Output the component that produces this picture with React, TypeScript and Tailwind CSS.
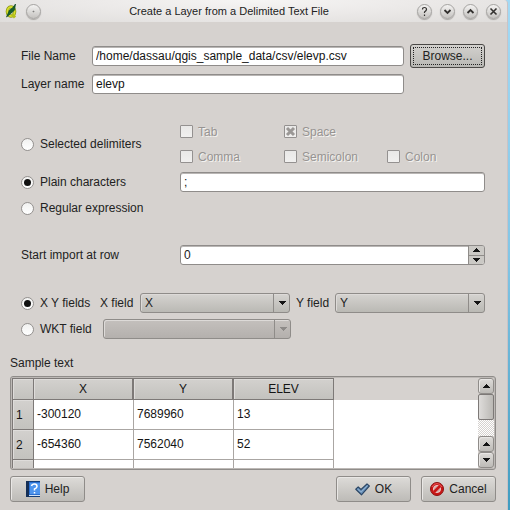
import React from "react";

const FIELD =
  "h-5 w-full min-w-0 rounded-[3px] border border-[#8f8c8a] bg-white px-[3px] text-[12px] leading-4 text-[#141414] shadow-[inset_0_1px_0_#b9b6b4] outline-none";
const BUTTON =
  "flex items-center justify-center rounded-[3px] border border-[#8f8c89] bg-linear-to-b from-[#dddbd8] to-[#bdbbb7] shadow-[inset_1px_1px_0_#e9e7e5]";

function Arrow({ up = false, dim = false }: { up?: boolean; dim?: boolean }) {
  return (
    <svg width="7" height="4" viewBox="0 0 7 4" aria-hidden="true" className={dim ? "text-[#8d8a88]" : "text-[#141414]"}>
      <path fill="currentColor" shapeRendering="crispEdges" d={up ? "M3 0h1v1h1v1h1v1h1v1H0V3h1V2h1V1h1z" : "M0 0h7v1H6v1H5v1H4v1H3V3H2V2H1V1H0z"} />
    </svg>
  );
}

function Radio({ id, group, label, checked = false }: { id: string; group: string; label: string; checked?: boolean }) {
  return (
    <div className="flex items-center gap-[6px]">
      <input
        id={id}
        type="radio"
        name={group}
        defaultChecked={checked}
        className="grid size-[13px] shrink-0 appearance-none place-items-center rounded-full border border-[#94918f] bg-linear-to-b from-[#f1f1f0] to-white checked:before:size-[7px] checked:before:rounded-full checked:before:bg-[#111] checked:before:content-['']"
      />
      <label htmlFor={id} className="whitespace-nowrap">{label}</label>
    </div>
  );
}

function Delimiter({ id, label, checked = false }: { id: string; label: string; checked?: boolean }) {
  return (
    <div className="flex h-[13px] items-center gap-[5px]">
      <span className="grid shrink-0">
        <input
          id={id}
          type="checkbox"
          disabled
          defaultChecked={checked}
          className="size-[13px] appearance-none rounded-[1px] border border-[#949190] bg-linear-to-b from-[#e9e8e7] to-[#f1f0ef] [grid-area:1/1]"
        />
        {checked && (
          <svg viewBox="0 0 13 13" aria-hidden="true" className="pointer-events-none size-[13px] [grid-area:1/1]">
            <path d="M3 3l7 7M10 3l-7 7" stroke="#9b9896" strokeWidth="3" />
          </svg>
        )}
      </span>
      <label htmlFor={id} className="text-[#979492] [text-shadow:1px_1px_0_#f4f2f0]">{label}</label>
    </div>
  );
}

function Combo({ id, label, value, disabled = false }: { id: string; label: string; value: string; disabled?: boolean }) {
  return (
    <div className="grid min-w-0 flex-1">
      <select
        id={id}
        aria-label={label}
        disabled={disabled}
        className="h-5 w-full appearance-none rounded-[3px] border border-[#8f8c89] bg-linear-to-b from-[#d5d3d0] to-[#bab9b4] px-1 text-[12px] leading-4 text-[#222] shadow-[inset_1px_1px_0_#dddad8] outline-none [grid-area:1/1] disabled:from-[#c4c0bd] disabled:to-[#b4b0ad] disabled:opacity-100"
      >
        <option>{value}</option>
      </select>
      <span className="pointer-events-none flex w-[17px] items-center justify-center justify-self-end border-l border-[#8f8c89] [grid-area:1/1]">
        <Arrow dim={disabled} />
      </span>
    </div>
  );
}

function TitleButton({ label, children }: { label: string; children: React.ReactNode }) {
  return (
    <button
      type="button"
      aria-label={label}
      className="grid size-[15px] shrink-0 place-items-center rounded-full border border-[#a5a3a1] bg-linear-to-b from-[#f4f3f2] to-[#c5c3c0] shadow-[0_1px_1px_#aaa7a4]"
    >
      <svg width="11" height="11" viewBox="0 0 11 11" aria-hidden="true" fill="none" stroke="#343230" strokeWidth="1.2">
        {children}
      </svg>
    </button>
  );
}

function TitleBar() {
  return (
    <header className="flex h-[22px] items-center bg-[radial-gradient(ellipse_at_top,#f6f5f4_0%,#eceae9_45%,#dfdddb_100%)] pr-[6px] pl-1">
      <div className="flex items-center gap-[7px]">
        <svg width="15" height="16" viewBox="0 0 15 16" aria-hidden="true">
          <ellipse cx="7" cy="8.500" rx="3.600" ry="4.600" fill="none" stroke="#8b9414" strokeWidth="3.400" />
          <ellipse cx="7" cy="8.500" rx="3.600" ry="4.600" fill="none" stroke="#d6df2c" strokeWidth="2" />
          <path d="M8 11l3 3.500" stroke="#b5c01c" strokeWidth="3" />
          <path d="M2.500 14l3-7 3-2 3-4-1 6-3 3z" fill="#17602d" stroke="#0d4821" strokeWidth=".7" />
        </svg>
        <TitleButton label="Keep above">
          <circle cx="5.500" cy="5.500" r=".2" />
        </TitleButton>
      </div>
      <h1 className="flex-1 text-center text-[11px]">Create a Layer from a Delimited Text File</h1>
      <div className="flex items-center gap-2">
        <TitleButton label="Help">
          <path d="M3.500 3.500Q3.500 1.500 5.500 1.500T7.500 3.500Q7.500 4.500 5.500 6V7M5.500 8.500V10" />
        </TitleButton>
        <TitleButton label="Minimize">
          <path d="M2.500 4l3 3 3-3" strokeWidth="1.800" />
        </TitleButton>
        <TitleButton label="Maximize">
          <path d="M2.500 7l3-3 3 3" strokeWidth="1.800" />
        </TitleButton>
        <TitleButton label="Close">
          <path d="M2.500 2.500l6 6M8.500 2.500l-6 6" strokeWidth="1.600" />
        </TitleButton>
      </div>
    </header>
  );
}

const ROWS = [
  ["-300120", "7689960", "13"],
  ["-654360", "7562040", "52"],
  ["", "", ""],
];
const HEAD =
  "border-b border-[#7d7977] bg-linear-to-b from-[#d3d1ce] to-[#c3c2be] font-normal shadow-[inset_1px_1px_0_#dedcda]";

function SampleTable() {
  return (
    <div className="flex h-[94px] overflow-hidden rounded-[3px] border border-[#8f8c89] p-px shadow-[inset_0_0_0_1px_#bdb9b6]">
      <div className="min-w-0 flex-1 overflow-hidden bg-[linear-gradient(#d6d2cf_22px,#fff_22px)]">
        <table className="w-[322px] table-fixed border-separate border-spacing-0 text-[#141414]">
          <colgroup>
            <col className="w-[22px]" />
            <col />
            <col />
            <col />
          </colgroup>
          <thead>
            <tr className="h-[22px]">
              <td className={`${HEAD} border-t border-r border-l`} />
              <th scope="col" className={`${HEAD} border-t border-r-2 p-0`}>X</th>
              <th scope="col" className={`${HEAD} border-t border-r-2 p-0`}>Y</th>
              <th scope="col" className={`${HEAD} border-t border-r p-0`}>ELEV</th>
            </tr>
          </thead>
          <tbody>
            {ROWS.map((row, i) => (
              <tr key={i} className="h-[30px]">
                <th scope="row" className={`${HEAD} border-r border-l px-[3px] py-0 text-left`}>{i < 2 ? i + 1 : ""}</th>
                {row.map((cell, j) => (
                  <td key={j} className="border-r border-b border-[#aaa6a3] px-[3px] pt-0 pb-px">{cell}</td>
                ))}
              </tr>
            ))}
          </tbody>
        </table>
      </div>
      <div className="flex w-4 flex-col">
        <button type="button" aria-label="Scroll up" className={`${BUTTON} h-4 border-[#7d7977]`}>
          <Arrow up />
        </button>
        <div className="h-[26px] rounded-[2px] border border-[#7d7977] bg-linear-to-r from-[#dedcda] to-[#bbb9b5]" />
        <div className="flex-1 bg-[repeating-conic-gradient(#d6d2cf_0_25%,#fff_0_50%)] bg-size-[2px_2px]" />
        <button type="button" aria-label="Previous line" className={`${BUTTON} h-4 border-[#7d7977]`}>
          <Arrow up />
        </button>
        <button type="button" aria-label="Next line" className={`${BUTTON} h-4 border-[#7d7977]`}>
          <Arrow />
        </button>
      </div>
    </div>
  );
}

export default function App() {
  return (
    <div className="min-h-screen bg-linear-to-b from-[#a3daf5] via-[#83c6e6] to-[#3f9cc0] pr-[2px] font-['Liberation_Sans',Arial,sans-serif] text-[12px] leading-4 text-[#222]">
      <main className="min-h-screen overflow-hidden rounded-tr-[4px] border-r border-[#c9c3c6] bg-[#d6d2cf]">
        <TitleBar />
        <form className="pr-[11px] pl-[10px]" onSubmit={(e) => e.preventDefault()}>
          <div className="pr-[11px] pl-[11px]">
            <div className="grid grid-cols-[65px_1fr_75px] items-center gap-x-[6px] gap-y-[6px] pt-[22px]">
              <label htmlFor="file">File Name</label>
              <input id="file" className={FIELD} defaultValue="/home/dassau/qgis_sample_data/csv/elevp.csv" />
              <button type="button" className="h-6 rounded-[3px] border border-[#4a4846] bg-linear-to-b from-[#d3d1ce] to-[#b9b8b4] p-[2px]">
                <span className="flex h-full items-center justify-center border border-dotted border-[#222]">Browse...</span>
              </button>
              <label htmlFor="layer" className="whitespace-nowrap">Layer name</label>
              <input id="layer" className={FIELD} defaultValue="elevp" />
            </div>

            <div className="mt-[31px] grid grid-cols-[159px_1fr] items-center">
              <Radio id="selected" group="mode" label="Selected delimiters" />
              <div className="grid grid-cols-[104px_103px_1fr] gap-y-3">
                <Delimiter id="tab" label="Tab" />
                <div className="col-span-2">
                  <Delimiter id="space" label="Space" checked />
                </div>
                <Delimiter id="comma" label="Comma" />
                <Delimiter id="semicolon" label="Semicolon" />
                <Delimiter id="colon" label="Colon" />
              </div>
            </div>

            <div className="mt-[9px] grid grid-cols-[159px_1fr] items-center gap-y-2">
              <Radio id="plain" group="mode" label="Plain characters" checked />
              <input aria-label="Plain characters value" className={FIELD} defaultValue=";" />
              <Radio id="regex" group="mode" label="Regular expression" />
            </div>

            <div className="mt-[29px] grid grid-cols-[159px_1fr] items-center">
              <label htmlFor="start">Start import at row</label>
              <div className="flex h-5 overflow-hidden rounded-[3px] border border-[#8f8c8a] bg-white shadow-[inset_0_1px_0_#b9b6b4]">
                <input id="start" inputMode="numeric" className="min-w-0 flex-1 bg-transparent px-[3px] outline-none" defaultValue="0" />
                <div className="flex w-4 flex-col border-l border-[#8f8c89] bg-[#cbc9c5]">
                  <button type="button" aria-label="Increase" className="flex flex-1 items-center justify-center border-b border-[#8f8c89]">
                    <Arrow up />
                  </button>
                  <button type="button" aria-label="Decrease" className="flex flex-1 items-center justify-center">
                    <Arrow />
                  </button>
                </div>
              </div>
            </div>

            <div className="mt-[28px] flex items-center">
              <div className="w-[79px]">
                <Radio id="xy" group="geometry" label="X Y fields" checked />
              </div>
              <label htmlFor="xfield" className="w-10">X field</label>
              <Combo id="xfield" label="X field" value="X" />
              <label htmlFor="yfield" className="w-[45px] pl-[6px]">Y field</label>
              <Combo id="yfield" label="Y field" value="Y" />
            </div>
            <div className="mt-[6px] grid grid-cols-[82px_188px]">
              <Radio id="wkt" group="geometry" label="WKT field" />
              <Combo id="wktfield" label="WKT field column" value="" disabled />
            </div>
          </div>

          <h2 className="mt-4 mb-[5px]">Sample text</h2>
          <SampleTable />
          <div className="flex gap-[10px] pt-[6px] pb-2">
            <button type="button" className={`${BUTTON} mr-auto h-[26px] w-[75px] gap-[5px]`}>
              <svg width="14" height="16" viewBox="0 0 14 16" aria-hidden="true">
                <path d="M0 1h14v14H0z" fill="#2a6fd0" />
                <path d="M4 2h10v11H4z" fill="#4d94ed" />
                <path d="M0 0h3v16H0z" fill="#142f57" />
                <path d="M3 0h11v1H3z" fill="#123d78" />
                <path d="M3 14h11v1H3z" fill="#d3e3f5" />
                <path d="M3 15h11v1H3z" fill="#123d78" />
                <path d="M5.500 5Q6 3 8.500 3T11 5.500Q11 7 8.500 8V9.500M8.500 11v1.500" fill="none" stroke="#fff" strokeWidth="1.500" />
              </svg>
              Help
            </button>
            <button type="submit" className={`${BUTTON} h-[26px] w-[75px] gap-[5px]`}>
              <svg width="15" height="13" viewBox="0 0 15 13" aria-hidden="true">
                <path d="M.8 6.200L3.200 4 6 6.500 12 1l2.300 2L6.500 11.800z" fill="#6d95bd" stroke="#2c4766" strokeWidth="1.200" strokeLinejoin="round" />
                <path d="M2.500 6L6 9l6.500-6.500" fill="none" stroke="#8fb0d0" />
              </svg>
              OK
            </button>
            <button type="button" className={`${BUTTON} h-[26px] w-[75px] gap-[5px]`}>
              <svg width="14" height="14" viewBox="0 0 14 14" aria-hidden="true">
                <circle cx="7" cy="7" r="6.500" fill="#c81616" stroke="#8c1212" />
                <circle cx="7" cy="7" r="3.600" fill="#d9a5a3" stroke="#f0dede" strokeWidth=".8" />
                <path d="M4 10l6-6" stroke="#c81616" strokeWidth="2.600" />
                <path d="M2 5Q4 1.500 7 1.500T12 5" fill="none" stroke="#e66" strokeWidth=".8" />
              </svg>
              Cancel
            </button>
          </div>
        </form>
      </main>
    </div>
  );
}
